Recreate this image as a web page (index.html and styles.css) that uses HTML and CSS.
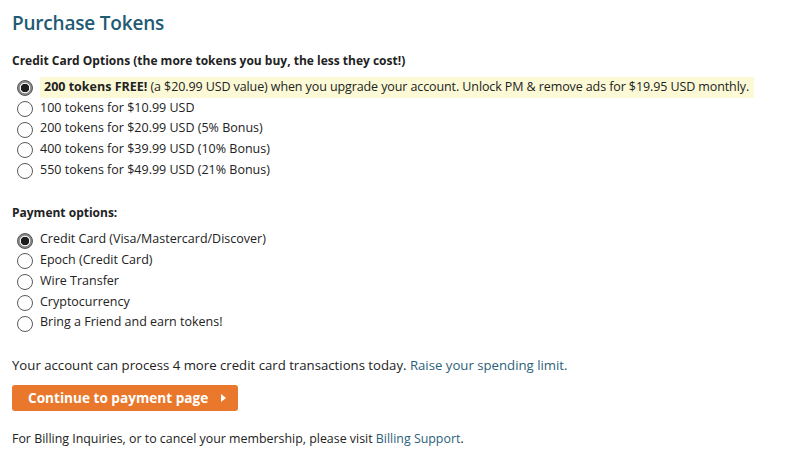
FILE: index.html
```html
<!DOCTYPE html>
<html lang="en">
<head>
    <meta charset="UTF-8">
    <meta name="viewport" content="width=device-width, initial-scale=1.0">
    <title>Purchase Tokens</title>
    <link rel="stylesheet" href="styles.css">
</head>
<body>
    <div class="page">
        <h1>Purchase Tokens</h1>

        <h2 class="group-title">Credit Card Options (the more tokens you buy, the less they cost!)</h2>
        <ul class="option-list">
            <li>
                <label>
                    <input type="radio" name="package" value="free" checked>
                    <span class="option-text promo"><b>200 tokens FREE!</b> (a $20.99 USD value) when you upgrade your account. Unlock PM &amp; remove ads for $19.95 USD monthly.</span>
                </label>
            </li>
            <li>
                <label>
                    <input type="radio" name="package" value="100">
                    <span class="option-text">100 tokens for $10.99 USD</span>
                </label>
            </li>
            <li>
                <label>
                    <input type="radio" name="package" value="200">
                    <span class="option-text">200 tokens for $20.99 USD (5% Bonus)</span>
                </label>
            </li>
            <li>
                <label>
                    <input type="radio" name="package" value="400">
                    <span class="option-text">400 tokens for $39.99 USD (10% Bonus)</span>
                </label>
            </li>
            <li>
                <label>
                    <input type="radio" name="package" value="550">
                    <span class="option-text">550 tokens for $49.99 USD (21% Bonus)</span>
                </label>
            </li>
        </ul>

        <h2 class="group-title payment-title">Payment options:</h2>
        <ul class="option-list">
            <li>
                <label>
                    <input type="radio" name="method" value="card" checked>
                    <span class="option-text">Credit Card (Visa/Mastercard/Discover)</span>
                </label>
            </li>
            <li>
                <label>
                    <input type="radio" name="method" value="epoch">
                    <span class="option-text">Epoch (Credit Card)</span>
                </label>
            </li>
            <li>
                <label>
                    <input type="radio" name="method" value="wire">
                    <span class="option-text">Wire Transfer</span>
                </label>
            </li>
            <li>
                <label>
                    <input type="radio" name="method" value="crypto">
                    <span class="option-text">Cryptocurrency</span>
                </label>
            </li>
            <li>
                <label>
                    <input type="radio" name="method" value="friend">
                    <span class="option-text">Bring a Friend and earn tokens!</span>
                </label>
            </li>
        </ul>

        <p class="limit-note">Your account can process 4 more credit card transactions today. <a href="#">Raise your spending limit.</a></p>

        <button class="continue-button">Continue to payment page <span class="arrow"></span></button>

        <p class="billing-note">For Billing Inquiries, or to cancel your membership, please visit <a href="#">Billing Support</a>.</p>
    </div>
</body>
</html>
```

FILE: styles.css
```css
:root {
    --heading: #1f5b74;
    --text: #222;
    --link: #2c5f7a;
    --promo: #fcfad6;
    --orange: #e9782c;
}

* {
    margin: 0;
    padding: 0;
    box-sizing: border-box;
}

body {
    font-family: "Open Sans", "Noto Sans", sans-serif;
    font-size: 12.5px;
    color: var(--text);
    background: #fff;
}

.page {
    padding: 11px 12px;
}

h1 {
    font-size: 19px;
    line-height: 24px;
    font-weight: 600;
    color: var(--heading);
    letter-spacing: -0.2px;
}

.group-title {
    font-size: 12px;
    line-height: 18px;
    font-weight: 700;
    margin-top: 17px;
}

.payment-title {
    margin-top: 24px;
}

.option-list {
    list-style: none;
    margin-top: 7px;
}

.option-list li {
    height: 20.7px;
}

.option-list label {
    display: flex;
    align-items: center;
    height: 100%;
    cursor: pointer;
}

.option-list input[type="radio"] {
    appearance: none;
    -webkit-appearance: none;
    width: 16px;
    height: 16px;
    margin: 2px 7px 0 5px;
    border: 1.3px solid #5a5a5a;
    border-radius: 50%;
    background: #fff;
    flex-shrink: 0;
}

.option-list input[type="radio"]:checked {
    background: radial-gradient(circle, #1e1e1e 0 4px, #f4f4f4 4.5px 5px, #8a8a8a 5.6px);
    border-color: #555;
}

.option-text {
    line-height: 20.7px;
    white-space: nowrap;
}

.promo {
    background: var(--promo);
    padding: 0 5px 0 4px;
    letter-spacing: -0.1px;
}

.promo b {
    font-weight: 700;
    letter-spacing: 0;
}

a {
    color: var(--link);
    text-decoration: none;
}

.limit-note {
    margin-top: 23px;
    line-height: 18px;
    font-size: 13.2px;
}

.continue-button {
    display: inline-flex;
    align-items: center;
    gap: 13px;
    margin-top: 11px;
    height: 26px;
    padding: 0 12px 0 16px;
    background: var(--orange);
    color: #fff;
    border: none;
    border-radius: 3px;
    font-family: inherit;
    font-size: 13.6px;
    font-weight: 700;
    cursor: pointer;
}

.arrow {
    width: 0;
    height: 0;
    border-top: 4.5px solid transparent;
    border-bottom: 4.5px solid transparent;
    border-left: 5px solid #fff;
}

.billing-note {
    margin-top: 19px;
    line-height: 18px;
    font-size: 12.4px;
}
```
